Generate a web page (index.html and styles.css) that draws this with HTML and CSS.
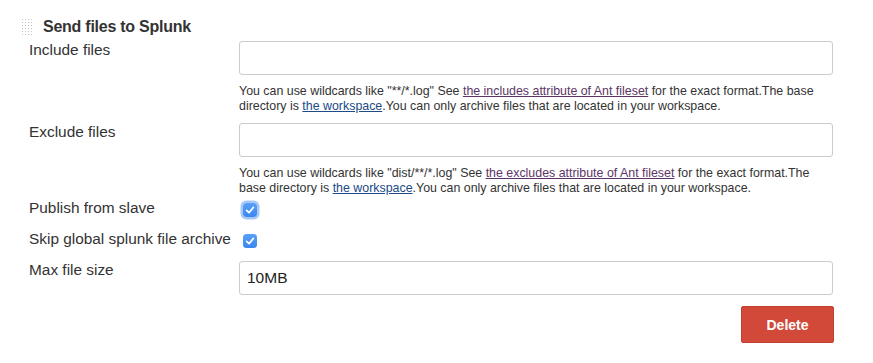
FILE: index.html
```html
<!DOCTYPE html>
<html>
<head>
<meta charset="utf-8">
<link rel="stylesheet" href="styles.css">
</head>
<body>
<div class="section">
  <div class="head">
    <span class="handle"></span>
    <span class="title">Send files to Splunk</span>
  </div>
  <div class="form">
    <div class="label r-include">Include files</div>
    <div class="r-include"><input class="text" type="text"></div>

    <div class="help r-help1">You can use wildcards like "**/*.log" See <a class="visited" href="#">the includes attribute of Ant fileset</a> for the exact format.The base directory is <a class="link" href="#">the workspace</a>.You can only archive files that are located in your workspace.</div>

    <div class="label r-exclude">Exclude files</div>
    <div class="r-exclude"><input class="text" type="text"></div>

    <div class="help r-help2">You can use wildcards like "dist/**/*.log" See <a class="visited" href="#">the excludes attribute of Ant fileset</a> for the exact format.The base directory is <a class="link" href="#">the workspace</a>.You can only archive files that are located in your workspace.</div>

    <div class="label r-publish">Publish from slave</div>
    <div class="r-publish"><span class="check focused"><svg viewBox="0 0 14 14" width="14" height="14"><path d="M3.6 7.3 L6 9.7 L10.4 4.4" fill="none" stroke="#fff" stroke-width="1.7" stroke-linecap="round" stroke-linejoin="round"/></svg></span></div>

    <div class="label r-skip">Skip global splunk file archive</div>
    <div class="r-skip"><span class="check"><svg viewBox="0 0 14 14" width="14" height="14"><path d="M3.6 7.3 L6 9.7 L10.4 4.4" fill="none" stroke="#fff" stroke-width="1.7" stroke-linecap="round" stroke-linejoin="round"/></svg></span></div>

    <div class="label r-max">Max file size</div>
    <div class="r-max"><input class="text" type="text" value="10MB"></div>

    <div class="actions"><button class="delete" type="button">Delete</button></div>
  </div>
</div>
</body>
</html>
```

FILE: styles.css
```css
html, body {
  margin: 0;
  padding: 0;
  background: #fff;
}
body {
  font-family: "Liberation Sans", Arial, Helvetica, sans-serif;
  color: #333;
}
.section {
  padding-top: 17px;
}
.head {
  display: flex;
  align-items: flex-start;
  height: 20px;
  padding-left: 21px;
}
.handle {
  display: block;
  width: 12px;
  height: 17px;
  margin-top: 1px;
  background-image: radial-gradient(circle, #c4c4c4 0.8px, transparent 1px);
  background-size: 3px 3px;
}
.title {
  margin-left: 10px;
  font-size: 16px;
  line-height: 20px;
  font-weight: bold;
  letter-spacing: -0.25px;
  color: #333;
}
.form {
  display: grid;
  grid-template-columns: 210px 594px;
  margin-left: 29px;
  margin-top: 4px;
}
.label {
  font-size: 15.4px;
  line-height: 18px;
  color: #333;
  white-space: nowrap;
}
.text {
  display: block;
  box-sizing: border-box;
  width: 594px;
  height: 34px;
  margin: 0;
  padding: 0 7px;
  border: 1px solid #ccc;
  border-radius: 3px;
  font-family: "Liberation Sans", Arial, sans-serif;
  font-size: 15.5px;
  color: #222;
  background: #fff;
  outline: none;
}
.help {
  grid-column: 2;
  max-width: 582px;
  font-size: 12.4px;
  line-height: 15px;
  color: #333;
  margin-top: 9px;
}
.help a {
  text-decoration: underline;
}
.help a.visited { color: #5c3566; }
.help a.link { color: #204a87; }
.r-exclude { margin-top: 9px; }
.r-publish { margin-top: 3px; height: 22px; }
.r-skip { margin-top: 9px; height: 22px; }
.r-max { margin-top: 9px; }
.check {
  display: block;
  width: 14px;
  height: 14px;
  margin-left: 4px;
  margin-top: 4px;
  border-radius: 3.5px;
  background: linear-gradient(#5aa0f7, #3a87f0);
}
.check svg { display: block; }
.check.focused {
  box-shadow: 0 0 0 2.5px rgba(94, 154, 240, 0.55);
}
.actions {
  grid-column: 2;
  display: flex;
  justify-content: flex-end;
  margin-top: 11px;
  margin-right: -1px;
}
.delete {
  width: 93px;
  height: 37px;
  margin: 0;
  padding: 0;
  border: 1px solid #c2402f;
  border-radius: 2px;
  background: #d24939;
  color: #fff;
  font-family: "Liberation Sans", Arial, sans-serif;
  font-size: 14px;
  font-weight: bold;
}
```
